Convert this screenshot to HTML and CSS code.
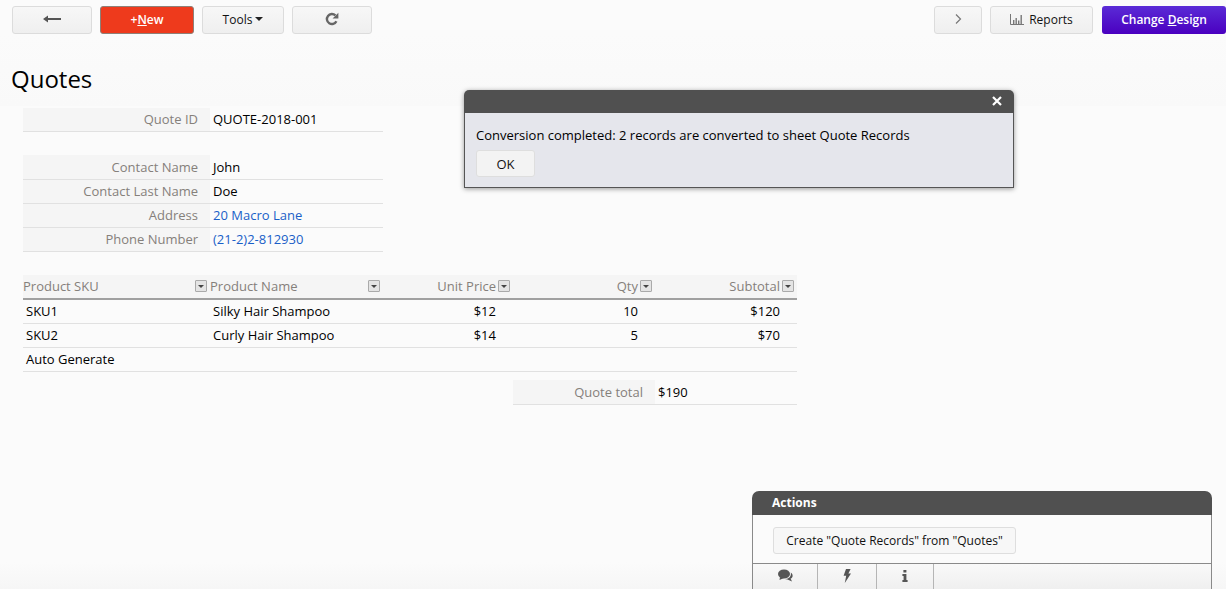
FILE: index.html
```html
<!DOCTYPE html>
<html lang="en">
<head>
<meta charset="utf-8">
<title>Quotes</title>
<link rel="stylesheet" href="styles.css">
</head>
<body>
<div class="page">
  <header class="toolbar">
    <div class="tool-group">
      <button class="btn btn-back"><svg width="18" height="8" viewBox="0 0 18 8"><path d="M0 4 L5 0.5 V3 H18 V5 H5 V7.5 Z" fill="#555"/></svg></button>
      <button class="btn btn-new"><span>+<u>N</u>ew</span></button>
      <button class="btn btn-tools">Tools<span class="caret"></span></button>
      <button class="btn btn-refresh"><svg width="14" height="14" viewBox="0 0 14 14"><path d="M11.4 9.2 A5 5 0 1 1 10.4 3.4" fill="none" stroke="#666" stroke-width="2.4"/><path d="M13.4 0.8 V6.6 H7.6 Z" fill="#666"/></svg></button>
    </div>
    <div class="tool-group">
      <button class="btn btn-next"><svg width="7" height="12" viewBox="0 0 7 12"><path d="M1 1.5 L5.5 6 L1 10.5" fill="none" stroke="#777" stroke-width="1.2"/></svg></button>
      <button class="btn btn-reports"><svg class="bars" width="14" height="11" viewBox="0 0 14 11"><path d="M0.5 0 V10.5 H14" fill="none" stroke="#777"/><path d="M3 6h1.4v4H3zM5.5 4h1.4v6H5.5zM8 6.5h1.4V10H8zM10.5 1h1.4v9h-1.4z" fill="#777"/></svg>Reports</button>
      <button class="btn btn-design"><span>Change <u>D</u>esign</span></button>
    </div>
  </header>

  <h1 class="title">Quotes</h1>

  <main class="content">
    <section class="record">
      <div class="row"><div class="label">Quote ID</div><div class="value">QUOTE-2018-001</div></div>
    </section>
    <section class="record record-contact">
      <div class="row row-first"><div class="label">Contact Name</div><div class="value">John</div></div>
      <div class="row"><div class="label">Contact Last Name</div><div class="value">Doe</div></div>
      <div class="row"><div class="label">Address</div><div class="value link">20 Macro Lane</div></div>
      <div class="row"><div class="label">Phone Number</div><div class="value link">(21-2)2-812930</div></div>
    </section>

    <section class="table">
      <div class="thead">
        <div class="th th-left th-first"><span>Product SKU</span><i class="filter"></i></div>
        <div class="th th-left th-second"><span>Product Name</span><i class="filter"></i></div>
        <div class="th"><span>Unit Price</span><i class="filter"></i></div>
        <div class="th"><span>Qty</span><i class="filter"></i></div>
        <div class="th th-last"><span>Subtotal</span><i class="filter"></i></div>
      </div>
      <div class="tr"><div class="td">SKU1</div><div class="td">Silky Hair Shampoo</div><div class="td num">$12</div><div class="td num">10</div><div class="td num num-last">$120</div></div>
      <div class="tr"><div class="td">SKU2</div><div class="td">Curly Hair Shampoo</div><div class="td num">$14</div><div class="td num">5</div><div class="td num num-last">$70</div></div>
      <div class="tr"><div class="td">Auto Generate</div></div>
      <div class="total"><div class="total-label">Quote total</div><div class="total-value">$190</div></div>
    </section>
  </main>
</div>

<div class="dialog">
  <div class="dialog-head"><svg width="10" height="10" viewBox="0 0 10 10"><path d="M1 1 L9 9 M9 1 L1 9" stroke="#fff" stroke-width="2.2"/></svg></div>
  <div class="dialog-body">
    <p class="dialog-text">Conversion completed: 2 records are converted to sheet Quote Records</p>
    <button class="btn-ok">OK</button>
  </div>
</div>

<aside class="actions">
  <div class="actions-head">Actions</div>
  <div class="actions-body"><button class="btn-action">Create "Quote Records" from "Quotes"</button></div>
  <div class="actions-tabs">
    <div class="tab tab-a"><svg width="15" height="13" viewBox="0 0 15 13"><ellipse cx="6" cy="5" rx="6" ry="4.6" fill="#555"/><path d="M2 8 L1.5 11 L6 9Z" fill="#555"/><path d="M12.8 3.5 C15.5 5.5 15 8.5 12.6 9.6 L14 12.4 L9.5 10.4 C8.5 10.4 7.5 10.2 7 10 C10.5 10 13.5 7.5 12.8 3.5Z" fill="#555"/></svg></div>
    <div class="tab tab-b"><svg width="8" height="14" viewBox="0 0 8 14"><path d="M3 0 H7.6 L5.4 4.6 H8 L1.8 14 L3.2 6.8 H0.6 Z" fill="#555"/></svg></div>
    <div class="tab tab-c"><svg width="6" height="12" viewBox="0 0 6 12"><path d="M1.4 0h3v2.4h-3zM0.4 4h4v6h1.2v2H0.4v-2h1.2V6H0.4z" fill="#555"/></svg></div>
  </div>
</aside>
</body>
</html>
```
FILE: styles.css
```css
* { box-sizing: border-box; }
html, body { margin: 0; height: 100%; overflow: hidden; }
body {
  background: linear-gradient(#fbfbfb 0, #fbfbfb 562px, #f6f6f6 589px);
  font-family: "Open Sans", "Noto Sans", sans-serif;
  font-size: 13px;
  color: #000;
  position: relative;
}
.page { width: 1226px; }
.toolbar {
  display: flex;
  justify-content: space-between;
  padding: 6px 0 0 12px;
  height: 34px;
}
.tool-group { display: flex; gap: 8px; }
.btn {
  height: 28px;
  padding: 0 0 2px;
  border: 1px solid #dcdcdc;
  border-radius: 3px;
  background: linear-gradient(#f7f7f7, #efefef);
  font: 12px "Open Sans", sans-serif;
  color: #111;
  display: flex;
  align-items: center;
  justify-content: center;
}
.btn-back { width: 80px; }
.btn-new {
  width: 94px;
  background: #ee3a1c;
  border-color: #8d8078;
  color: #fff;
  font-weight: 600;
}
.btn-tools { width: 82px; }
.btn-refresh { width: 80px; }
.btn-next { width: 48px; }
.btn-reports { width: 103px; }
.btn-design {
  width: 124px;
  border: 0;
  background: linear-gradient(#5a2bd6, #4a00c0);
  color: #fff;
  font-weight: 600;
  margin-left: 1px;
}
.caret {
  width: 0;
  height: 0;
  margin-left: 3px;
  border-left: 4px solid transparent;
  border-right: 4px solid transparent;
  border-top: 4px solid #222;
}
.bars { margin-right: 5px; }

.title {
  margin: 0;
  padding: 28px 0 0 11px;
  height: 72px;
  font-size: 24px;
  font-weight: 400;
  line-height: 33px;
  background: linear-gradient(#fbfbfb, #f9f9f9);
}
.content { padding: 2px 0 0 23px; }
.record { width: 360px; }
.record-contact { margin-top: 23px; }
.row {
  display: grid;
  grid-template-columns: 187px 1fr;
  height: 24px;
  border-bottom: 1px solid #e1e1e1;
  line-height: 22px;
}
.label {
  background: #f5f5f5;
  color: #85807b;
  text-align: right;
  padding-right: 12px;
  height: 23px;
}
.value { padding-left: 3px; }
.link { color: #1a5fc8; }
.row-first { height: 25px; }
.row-first .label { height: 24px; padding-top: 1px; }
.row-first .value { padding-top: 1px; }

.table { width: 774px; margin-top: 23px; }
.thead, .tr {
  display: grid;
  grid-template-columns: 187px 173px 129px 142px 143px;
}
.thead {
  height: 25px;
  background: #f5f5f5;
  border-bottom: 2px solid #a0a0a0;
}
.th {
  display: flex;
  justify-content: flex-end;
  align-items: center;
  gap: 2px;
  padding-right: 2px;
  color: #85807b;
  height: 22px;
}
.th-left { justify-content: space-between; }
.th-first { padding-right: 3px; }
.th-second { padding-right: 3px; }
.th-last { padding-right: 3px; }
.filter {
  width: 12px;
  height: 12px;
  border: 1px solid #aaa;
  border-radius: 1px;
  background: #e4e4e4;
  position: relative;
  margin-top: -1px;
}
.filter::after {
  content: "";
  position: absolute;
  left: 2px;
  top: 4px;
  border-left: 3px solid transparent;
  border-right: 3px solid transparent;
  border-top: 3px solid #444;
}
.tr {
  height: 24px;
  border-bottom: 1px solid #e1e1e1;
  line-height: 23px;
}
.td { padding-left: 3px; white-space: nowrap; }
.num { text-align: right; padding-right: 16px; padding-left: 0; }
.num-last { padding-right: 17px; }
.total {
  display: grid;
  grid-template-columns: 142px 1fr;
  width: 284px;
  height: 25px;
  margin: 8px 0 0 490px;
  border-bottom: 1px solid #e1e1e1;
  line-height: 24px;
}
.total-label {
  background: #f5f5f5;
  color: #85807b;
  text-align: right;
  padding-right: 12px;
  height: 24px;
}
.total-value { padding-left: 3px; }

.dialog {
  position: absolute;
  left: 464px;
  top: 90px;
  width: 550px;
  height: 98px;
  border-radius: 5px 5px 0 0;
  box-shadow: 0 1px 5px rgba(0, 0, 0, .4);
  z-index: 2;
}
.dialog-head {
  height: 23px;
  background: #505050;
  border-radius: 5px 5px 0 0;
  display: flex;
  justify-content: flex-end;
  align-items: center;
  padding: 0 12px 2px 0;
}
.dialog-body {
  height: 75px;
  background: #e5e6ec;
  border: 1px solid #555;
  border-top: 0;
  padding: 12px 11px 0;
}
.dialog-text { margin: 0 0 5px; line-height: 20px; }
.btn-ok {
  display: block;
  width: 59px;
  height: 27px;
  padding: 0;
  border: 1px solid #dedede;
  border-radius: 3px;
  background: #f3f3f3;
  font: 13px "Open Sans", sans-serif;
  color: #111;
}

.actions {
  position: absolute;
  left: 752px;
  top: 491px;
  width: 460px;
  height: 98px;
}
.actions-head {
  height: 24px;
  background: #505050;
  border-radius: 7px 7px 0 0;
  color: #fff;
  font-weight: 700;
  font-size: 12px;
  line-height: 23px;
  padding-left: 20px;
}
.actions-body {
  height: 49px;
  background: #fbfbfb;
  border: 1px solid #8a8a8a;
  border-top: 0;
  padding: 12px 20px 0;
}
.btn-action {
  display: block;
  width: 243px;
  height: 27px;
  padding: 0;
  border: 1px solid #dedede;
  border-radius: 3px;
  background: #f7f7f7;
  font: 12px "Open Sans", sans-serif;
  color: #111;
}
.actions-tabs {
  display: flex;
  height: 25px;
  border-left: 1px solid #8a8a8a;
  border-right: 1px solid #8a8a8a;
  background: linear-gradient(#f9f9f9, #efefef);
}
.tab {
  display: flex;
  justify-content: center;
  align-items: center;
  border-right: 1px solid #b5b5b5;
  padding-bottom: 2px;
}
.tab-a { width: 65px; }
.tab-b { width: 59px; }
.tab-c { width: 57px; }
```
